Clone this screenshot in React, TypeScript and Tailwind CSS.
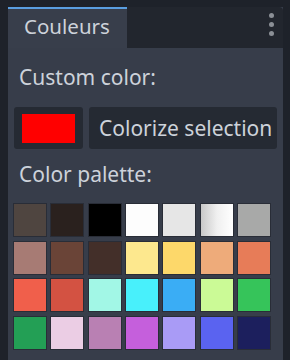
import React from 'react';

const swatches = [
  '#4f4540', '#2a211e', '#000000', '#fdfdfd', '#e6e6e6', 'grad', '#a8a9a8',
  '#a77b74', '#6a4437', '#432f29', '#fde88e', '#fdd86a', '#eeab7a', '#e77c58',
  '#f05f4b', '#d35242', '#a2f7e6', '#48f0fb', '#3aadf5', '#cbfa96', '#36c45a',
  '#239f55', '#ebcde4', '#b980b3', '#c55fdc', '#a99bf6', '#5a63f0', '#1c1f5d',
];

export default function App() {
  return (
    <div className="w-[290px] h-[360px] bg-[#1e222a] pl-2 pr-[7px] pt-[7px] overflow-hidden font-['Noto_Sans',sans-serif] text-[#cdd2da]">
      <div className="flex flex-col h-full bg-[#373d4a]">
        {/* tab bar */}
        <div className="flex h-[41px]">
          <div className="w-[119px] border-t-2 border-[#5a9ee0] bg-[#383e4b] pl-4 pt-[4px] text-[20.5px] leading-[26px]">
            Couleurs
          </div>
          <div className="flex-1 bg-[#22262e] rounded-tr-[4px] flex justify-end pr-[9px] pt-[6px]">
            <div className="flex flex-col gap-[4px]">
              <span className="w-[5px] h-[5px] rounded-full bg-[#8b8f96]" />
              <span className="w-[5px] h-[5px] rounded-full bg-[#8b8f96]" />
              <span className="w-[5px] h-[5px] rounded-full bg-[#8b8f96]" />
            </div>
          </div>
        </div>

        {/* body */}
        <div className="flex-1 flex flex-col pl-[6px] pt-[15px] pr-[6px]">
          <div className="pl-[5px] text-[21px] leading-[28px]">Custom color:</div>
          <div className="flex gap-[6px] mt-4 h-[42px]">
            <div className="w-[69px] rounded-[3px] bg-[#252a33] flex items-center justify-center">
              <div className="w-[53px] h-[29px] bg-[#ff0000]" />
            </div>
            <div className="w-[188px] rounded-[3px] bg-[#252a33] flex items-center pl-[10px] text-[21px] leading-[28px]">
              Colorize selection
            </div>
          </div>
          <div className="pl-[5px] mt-[11px] text-[21px] leading-[28px]">Color palette:</div>
          <div className="grid grid-cols-[repeat(7,32px)] gap-x-[5.33px] gap-y-[5.67px] mt-4">
            {swatches.map((c, i) =>
              c === 'grad' ? (
                <div
                  key={i}
                  className="h-8 bg-gradient-to-r from-[#c8c8c8] via-[#f0f0f0] to-[#ffffff] shadow-[0_0_0_1px_rgba(20,22,28,0.4)]"
                />
              ) : (
                <div
                  key={i}
                  className="h-8 shadow-[0_0_0_1px_rgba(20,22,28,0.4)]"
                  style={{ backgroundColor: c }}
                />
              )
            )}
          </div>
        </div>
      </div>
    </div>
  );
}
